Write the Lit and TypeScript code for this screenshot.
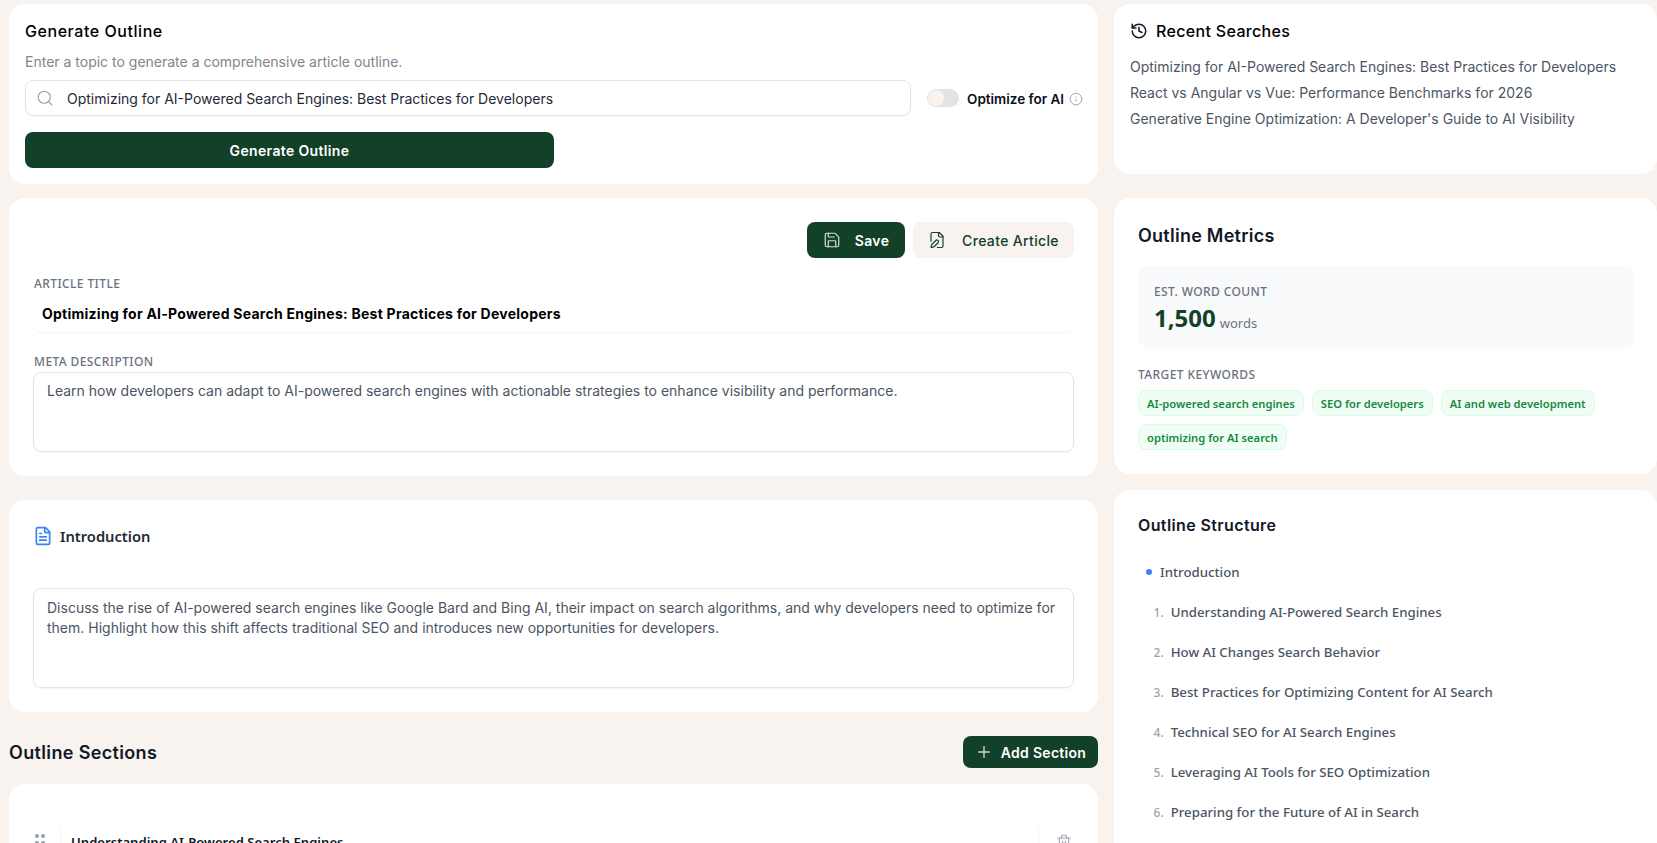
import { LitElement, html, css, svg } from "lit";
import { customElement } from "lit/decorators.js";

const ico = (size: number, cls: string, body: unknown, sw = 2) => html`<svg class=${cls} width=${size} height=${size} viewBox="0 0 24 24" fill="none" stroke="currentColor" stroke-width=${sw} stroke-linecap="round" stroke-linejoin="round">${body}</svg>`;

const icons = {
  search: svg`<circle cx="11" cy="11" r="8"/><path d="m21 21-4.3-4.3"/>`,
  info: svg`<circle cx="12" cy="12" r="10"/><path d="M12 16v-4"/><path d="M12 8h.01"/>`,
  history: svg`<path d="M3 12a9 9 0 1 0 9-9 9.75 9.75 0 0 0-6.74 2.74L3 8"/><path d="M3 3v5h5"/><path d="M12 7v5l4 2"/>`,
  save: svg`<path d="M15.2 3a2 2 0 0 1 1.4.6l3.8 3.8a2 2 0 0 1 .6 1.4V19a2 2 0 0 1-2 2H5a2 2 0 0 1-2-2V5a2 2 0 0 1 2-2z"/><path d="M17 21v-7a1 1 0 0 0-1-1H8a1 1 0 0 0-1 1v7"/><path d="M7 3v4a1 1 0 0 0 1 1h7"/>`,
  filePen: svg`<path d="M12.5 22H18a2 2 0 0 0 2-2V7l-5-5H6a2 2 0 0 0-2 2v9.5"/><path d="M14 2v4a2 2 0 0 0 2 2h4"/><path d="M13.378 15.626a1 1 0 1 0-3.004-3.004l-5.01 5.012a2 2 0 0 0-.506.854l-.837 2.87a.5.5 0 0 0 .62.62l2.87-.837a2 2 0 0 0 .854-.506z"/>`,
  fileText: svg`<path d="M15 2H6a2 2 0 0 0-2 2v16a2 2 0 0 0 2 2h12a2 2 0 0 0 2-2V7Z"/><path d="M14 2v4a2 2 0 0 0 2 2h4"/><path d="M10 9H8"/><path d="M16 13H8"/><path d="M16 17H8"/>`,
  plus: svg`<path d="M5 12h14"/><path d="M12 5v14"/>`,
  trash: svg`<path d="M3 6h18"/><path d="M19 6v14a2 2 0 0 1-2 2H7a2 2 0 0 1-2-2V6"/><path d="M8 6V4a2 2 0 0 1 2-2h4a2 2 0 0 1 2 2v2"/><path d="M10 11v6"/><path d="M14 11v6"/>`,
};

const recent = [
  "Optimizing for AI-Powered Search Engines: Best Practices for Developers",
  "React vs Angular vs Vue: Performance Benchmarks for 2026",
  "Generative Engine Optimization: A Developer's Guide to AI Visibility",
];
const keywords = ["AI-powered search engines", "SEO for developers", "AI and web development", "optimizing for AI search"];
const structure = [
  "Understanding AI-Powered Search Engines",
  "How AI Changes Search Behavior",
  "Best Practices for Optimizing Content for AI Search",
  "Technical SEO for AI Search Engines",
  "Leveraging AI Tools for SEO Optimization",
  "Preparing for the Future of AI in Search",
];

@customElement("app-root")
export class AppRoot extends LitElement {
  static styles = css`
    :host { display: block; height: 843px; overflow: hidden; background: #f8f3ef; font-family: Inter, "Liberation Sans", sans-serif; color: #111827; }
    * { box-sizing: border-box; }
    svg { display: block; flex: none; }
    .page { display: grid; grid-template-columns: 1089px 543px; column-gap: 16px; padding: 4px 0 0 9px; align-items: start; }
    .col { display: flex; flex-direction: column; }
    .card { background: #fff; border-radius: 16px; }
    .head { font-weight: 500; font-size: 16px; line-height: 24px; letter-spacing: 0.55px; color: #000; }

    .gen { height: 180px; padding: 15px 16px 0; margin-bottom: 14px; }
    .sub { font-size: 14px; line-height: 20px; color: #80858f; margin-top: 9px; }
    .row { display: flex; align-items: center; margin-top: 8px; }
    .search { flex: none; width: 886px; height: 36px; border: 1px solid #e3e4e8; border-radius: 8px; display: flex; align-items: center; padding-left: 10px; font-size: 14px; color: #1f2937; box-shadow: 0 1px 2px rgba(0,0,0,.04); }
    .search svg { color: #9ca3af; margin-right: 13px; }
    .toggle { flex: none; width: 32px; height: 18px; border-radius: 9px; background: #e3e3e3; margin-left: 16px; display: flex; align-items: center; padding-left: 1px; }
    .knob { width: 16px; height: 16px; border-radius: 50%; background: #f8f3ef; }
    .opt { flex: none; font-weight: 600; font-size: 13.5px; margin-left: 8px; padding-top: 1px; color: #0b0f19; white-space: nowrap; }
    .row .info { color: #9ca3af; margin-left: 5px; margin-top: 1px; }
    .primary { background: #124028; color: #fff; border-radius: 8px; font-weight: 600; display: flex; align-items: center; justify-content: center; font-size: 14px; letter-spacing: 0.35px; }
    .genbtn { width: 529px; height: 36px; margin-top: 16px; }

    .article { height: 278px; padding: 24px 24px 0; margin-bottom: 24px; }
    .actions { display: flex; justify-content: flex-end; gap: 8px; }
    .save { width: 98px; height: 36px; gap: 14px; }
    .save svg { color: #d5ddd8; }
    .create { width: 161px; height: 36px; border-radius: 8px; background: #f8f3ef; color: #124028; font-size: 14px; font-weight: 500; letter-spacing: 0.35px; display: flex; align-items: center; justify-content: center; gap: 16px; }
    .lbl { font-family: "Noto Sans", sans-serif; font-size: 12px; line-height: 16px; font-weight: 500; letter-spacing: 0.4px; color: #6b7280; text-transform: uppercase; }
    .article .lbl { padding-left: 1px; }
    .article .l1 { margin-top: 18px; }
    .title { height: 36px; margin-top: 4px; border-radius: 8px; box-shadow: 0 1px 2px rgba(0,0,0,.05); display: flex; align-items: center; padding: 0 0 2px 9px; font-weight: 700; font-size: 14px; letter-spacing: 0.25px; color: #000; }
    .article .l2 { margin-top: 22px; }
    .area { border: 1px solid #e3e4e8; border-radius: 8px; padding: 9px 13px; font-size: 14px; line-height: 20px; color: #4b5563; box-shadow: 0 1px 2px rgba(0,0,0,.04); }
    .meta { height: 80px; margin-top: 2px; padding-top: 8px; }

    .intro { height: 212px; padding: 24px 24px 0; margin-bottom: 24px; }
    .intro-head { display: flex; align-items: center; gap: 7px; height: 24px; font-family: "Noto Sans", sans-serif; font-size: 14.7px; font-weight: 600; color: #1f2937; }
    .intro-head svg { color: #3b82f6; }
    .intro .area { height: 100px; margin-top: 40px; }

    .sec-head { display: flex; justify-content: space-between; align-items: center; height: 32px; margin-bottom: 16px; }
    .sec-title { font-weight: 600; font-size: 18px; letter-spacing: 0.35px; color: #111827; }
    .add { width: 135px; height: 32px; gap: 8px; letter-spacing: 0.28px; }
    .add svg { color: #cfd9d3; }
    .sec { height: 200px; padding: 43px 0 0 26px; display: flex; align-items: flex-start; }
    .grip { display: grid; grid-template-columns: 3px 3px; gap: 3px 3px; margin: 7px 0 0; }
    .grip i { width: 3.5px; height: 3.5px; border-radius: 50%; background: #9ca3af; }
    .sec-name { margin-left: 16px; border-left: 1px solid #f3f4f6; padding: 5px 0 0 10px; flex: 1; font-family: "Noto Sans", sans-serif; font-weight: 600; font-size: 13.1px; line-height: 20px; color: #111827; height: 40px; }
    .trash { border-left: 1px solid #f3f4f6; width: 60px; height: 40px; padding: 7px 0 0 17px; color: #9ca3af; }

    .recent { height: 170px; padding: 15px 16px 0; margin-bottom: 24px; }
    .recent-head { display: flex; align-items: center; gap: 8px; }
    .recent-head .head { letter-spacing: 0.33px; }
    .recent-list { margin-top: 11px; font-size: 14px; line-height: 26px; color: #4b5563; }

    .metrics { height: 276px; padding: 26px 24px 0; margin-bottom: 16px; }
    .m-title { font-weight: 600; font-size: 18px; line-height: 24px; letter-spacing: 0.25px; color: #111827; }
    .box { width: 497px; height: 83px; background: #f9fafb; border-radius: 12px; margin-top: 18px; padding: 18px 16px 0; }
    .count { display: flex; align-items: flex-end; gap: 4px; font-family: "Noto Sans", sans-serif; margin-top: 2px; }
    .big { font-size: 24px; line-height: 32px; font-weight: 700; color: #124028; }
    .words { font-size: 13px; line-height: 18px; margin-bottom: 2px; color: #6b7280; }
    .metrics .l3 { margin-top: 18px; }
    .chips { display: flex; flex-wrap: wrap; gap: 8px; margin-top: 7px; width: 490px; }
    .chip { height: 26px; border: 1px solid #dcfce7; background: #f0fdf4; border-radius: 8px; padding: 0 8px; display: flex; align-items: center; font-family: "Noto Sans", sans-serif; font-size: 11.2px; font-weight: 600; color: #15893f; white-space: nowrap; }

    .struct { height: 500px; padding: 23px 24px 0; }
    .s-title { font-weight: 600; font-size: 16px; line-height: 24px; letter-spacing: 0.38px; color: #111827; }
    .s-list { font-family: "Noto Sans", sans-serif; font-size: 13.25px; font-weight: 500; color: #4b5563; margin-top: 15px; }
    .s-row { height: 40px; display: flex; align-items: center; padding-left: 15.5px; gap: 7px; }
    .s-row.first { padding-left: 8px; gap: 8px; }
    .dot { width: 6px; height: 6px; border-radius: 50%; background: #3b82f6; }
    .num { font-size: 12px; color: #9ca3af; }
  `;

  render() {
    return html`<div class="page">
      <div class="col">
        <section class="card gen">
          <div class="head">Generate Outline</div>
          <div class="sub">Enter a topic to generate a comprehensive article outline.</div>
          <div class="row">
            <div class="search">${ico(18, "", icons.search, 1.6)}<span>${recent[0]}</span></div>
            <div class="toggle"><div class="knob"></div></div>
            <span class="opt">Optimize for AI</span>
            ${ico(14, "info", icons.info, 1.6)}
          </div>
          <div class="primary genbtn">Generate Outline</div>
        </section>

        <section class="card article">
          <div class="actions">
            <div class="primary save">${ico(18, "", icons.save, 1.6)}<span>Save</span></div>
            <div class="create">${ico(18, "", icons.filePen, 1.6)}<span>Create Article</span></div>
          </div>
          <div class="lbl l1">Article Title</div>
          <div class="title">${recent[0]}</div>
          <div class="lbl l2">Meta Description</div>
          <div class="area meta">Learn how developers can adapt to AI-powered search engines with actionable strategies to enhance visibility and performance.</div>
        </section>

        <section class="card intro">
          <div class="intro-head">${ico(20, "", icons.fileText, 2)}<span>Introduction</span></div>
          <div class="area">Discuss the rise of AI-powered search engines like Google Bard and Bing AI, their impact on search algorithms, and why developers need to optimize for them. Highlight how this shift affects traditional SEO and introduces new opportunities for developers.</div>
        </section>

        <div class="sec-head">
          <div class="sec-title">Outline Sections</div>
          <div class="primary add">${ico(18, "", icons.plus, 1.8)}<span>Add Section</span></div>
        </div>
        <section class="card sec">
          <div class="grip"><i></i><i></i><i></i><i></i><i></i><i></i></div>
          <div class="sec-name">Understanding AI-Powered Search Engines</div>
          <div class="trash">${ico(16, "", icons.trash, 1.6)}</div>
        </section>
      </div>

      <div class="col">
        <section class="card recent">
          <div class="recent-head">${ico(18, "", icons.history, 2)}<div class="head">Recent Searches</div></div>
          <div class="recent-list">${recent.map((r) => html`<div>${r}</div>`)}</div>
        </section>

        <section class="card metrics">
          <div class="m-title">Outline Metrics</div>
          <div class="box">
            <div class="lbl">Est. Word Count</div>
            <div class="count"><span class="big">1,500</span><span class="words">words</span></div>
          </div>
          <div class="lbl l3">Target Keywords</div>
          <div class="chips">${keywords.map((k) => html`<span class="chip">${k}</span>`)}</div>
        </section>

        <section class="card struct">
          <div class="s-title">Outline Structure</div>
          <div class="s-list">
            <div class="s-row first"><span class="dot"></span><span>Introduction</span></div>
            ${structure.map((s, i) => html`<div class="s-row"><span class="num">${i + 1}.</span><span>${s}</span></div>`)}
          </div>
        </section>
      </div>
    </div>`;
  }
}
